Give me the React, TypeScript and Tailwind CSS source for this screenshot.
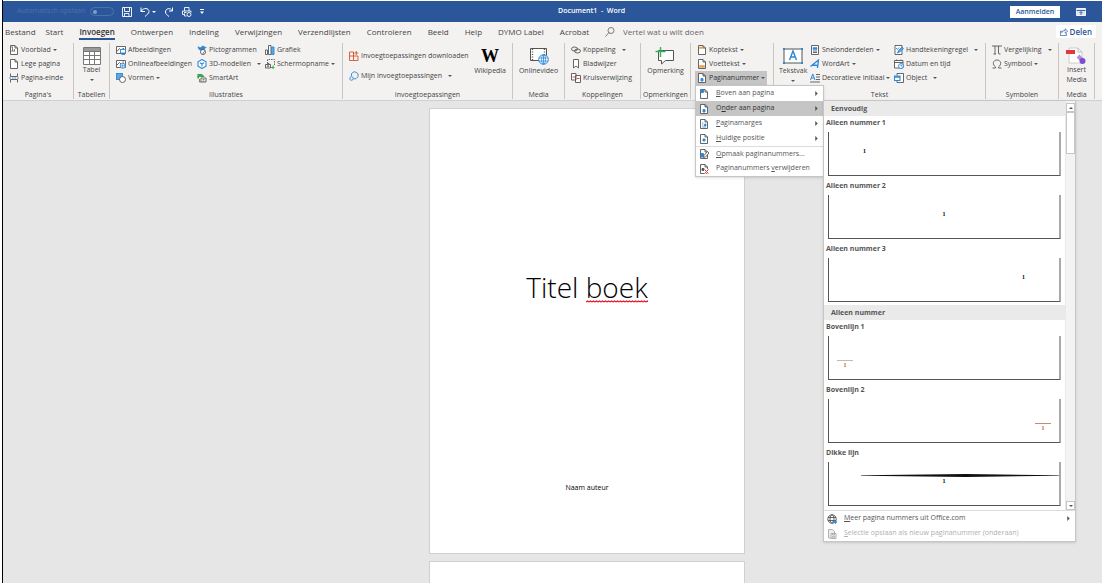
import React from 'react'

type IconProps = { children?: React.ReactNode; className?: string; box?: string }

const Icon = ({ children, className = 'size-[10px]', box = '0 0 20 20' }: IconProps) => (
  <svg viewBox={box} className={`shrink-0 ${className}`} fill="none" stroke="#555" strokeWidth="1.8" aria-hidden="true">
    {children}
  </svg>
)

const BLUE = '#2b88d8'

const PageOutline = () => <path d="M3 1h9l5 5v13H3zM12 1v5h5" fill="#fff" />

const CoverIcon = () => (
  <Icon>
    <PageOutline />
    <path d="M3 4h4M7 3v9M11 8v5M3 12h9" stroke="#777" />
  </Icon>
)

const BlankPageIcon = () => (
  <Icon>
    <PageOutline />
  </Icon>
)

const PageBreakIcon = () => (
  <Icon>
    <path d="M3 1v6h14V1M3 19v-6h14v6" />
    <path d="M0 10h4M6 10h3M11 10h3M16 10h4" stroke={BLUE} />
  </Icon>
)

const TableIcon = () => (
  <Icon className="size-[18px]" box="0 0 18 18">
    <path d="M.5.500h17v17H.5z" fill="#fff" strokeWidth="1" stroke="#777" />
    <path d="M1 2.500h16" strokeWidth="3" stroke="#999" />
    <path d="M1 4.500h16M1 8.500h16M1 12.500h16M6.500 4v13M11.500 4v13" strokeWidth="1" stroke="#777" />
  </Icon>
)

const PicturesIcon = () => (
  <Icon>
    <path d="M1 3h18v14H1zM2 13l5-6 5 5M13 7h3" fill="#fff" />
    <rect x="9" y="9" width="10" height="7" fill="#fff" stroke={BLUE} />
    <path d="M11 19h7" stroke={BLUE} />
  </Icon>
)

const OnlinePicturesIcon = () => (
  <Icon>
    <path d="M1 3h18v14H1zM2 12l5-5 4 4M13 6h3" fill="#fff" />
    <circle cx="13.5" cy="13.5" r="5" fill="#fff" stroke={BLUE} />
    <path d="M9 13.5h9M13.5 9v9" stroke={BLUE} strokeWidth="1.4" />
  </Icon>
)

const ShapesIcon = () => (
  <Icon>
    <rect x="1" y="1" width="12" height="12" fill="#5ba7e4" stroke={BLUE} />
    <circle cx="13" cy="13" r="6" fill="#fff" />
  </Icon>
)

const PictogramIcon = () => (
  <Icon>
    <path d="M2 3c2 2 5 3 7 1 1-3 5-3 6 0l4 1-3 1c0 5-6 6-10 4-3-1-4-4-4-7z" fill={BLUE} stroke={BLUE} strokeWidth="1" />
    <circle cx="12" cy="14" r="5" fill="#fff" />
    <path d="M12 19c0-4 2-6 4-7" strokeWidth="1.4" />
  </Icon>
)

const CubeIcon = () => (
  <Icon>
    <path d="M10 1l8 4.500v9L10 19l-8-4.500v-9z" fill="#fff" stroke={BLUE} strokeWidth="2.200" />
    <path d="M6 7.500l4 2.500 4-2.500M10 10v5" stroke={BLUE} strokeWidth="2.200" />
  </Icon>
)

const SmartArtIcon = () => (
  <Icon>
    <path d="M1 3h9l4 4H1l3 3H1" fill="#3fae49" stroke="#2d9c46" />
    <path d="M8 10h10v8H8z" fill="#fff" />
    <path d="M5 12v6h3M11 13h4M11 16h4" strokeWidth="1.400" />
  </Icon>
)

const ChartIcon = () => (
  <Icon>
    <path d="M1 10h4v9H1zM7 1h5v18H7z" fill="#fff" />
    <path d="M13 4h5v15h-5z" fill="#5ba7e4" stroke={BLUE} />
  </Icon>
)

const ScreenshotIcon = () => (
  <Icon>
    <path d="M5 9V1h14v11" strokeDasharray="3 2" />
    <path d="M1 11h10v7H1z" fill="#fff" />
    <path d="M4 11l1-2h3l1 2" />
    <circle cx="6" cy="14.500" r="1.500" />
    <path d="M12 17h7M16 13v7" stroke="#2fb457" strokeWidth="2.200" />
  </Icon>
)

const StoreIcon = () => (
  <Icon>
    <path d="M1 2h8v17H1zM1 10h17v9H9M9 10V2" stroke="#d8512d" />
    <path d="M14.500 0v8M10.500 4h8" stroke="#d8512d" />
  </Icon>
)

const AddInsIcon = () => (
  <Icon>
    <path d="M5 10V5l5-3.500 4 1 4 3v6l-4 4H9" stroke={BLUE} />
    <circle cx="5" cy="15" r="3.500" stroke={BLUE} />
  </Icon>
)

const VideoIcon = () => (
  <Icon className="h-[18px] w-5" box="0 0 20 18">
    <path d="M1.500 1.500h16v12h-16z" fill="#fff" strokeWidth="1" />
    <path d="M3.500 2v12M15.500 2v6" strokeWidth="1.400" strokeDasharray="1 1.500" />
    <circle cx="14.500" cy="12.500" r="4.800" fill="#fff" stroke={BLUE} strokeWidth="1" />
    <ellipse cx="14.500" cy="12.500" rx="2" ry="4.800" stroke={BLUE} strokeWidth=".8" />
    <path d="M10 11h9M10 14h9M14.500 8v9" stroke={BLUE} strokeWidth=".8" />
  </Icon>
)

const LinkIcon = () => (
  <Icon>
    <ellipse cx="7" cy="8" rx="6" ry="4" />
    <ellipse cx="13" cy="12" rx="6" ry="4" />
  </Icon>
)

const BookmarkIcon = () => (
  <Icon>
    <path d="M5 1h10v17l-5-4-5 4z" fill="#fff" />
  </Icon>
)

const CrossRefIcon = () => (
  <Icon>
    <path d="M1 1h9v13H1zM9 5h10v14H9z" fill="#fff" />
    <path d="M3 8h5M12 11h5" stroke="#e0533a" strokeWidth="2" />
  </Icon>
)

const CommentIcon = () => (
  <Icon className="h-[18px] w-5" box="0 0 20 18">
    <path d="M3.500 3.500h15v10h-8l-4 3.500v-3.500h-3z" fill="#fff" strokeWidth="1" />
    <path d="M5.500 0v10M.500 4.500h10" stroke="#2fb457" strokeWidth="1.400" />
  </Icon>
)

const HeaderIcon = () => (
  <Icon>
    <PageOutline />
    <path d="M5 4h6v3H5z" fill="#ed9b45" stroke="#ed9b45" strokeWidth="1" />
  </Icon>
)

const FooterIcon = () => (
  <Icon>
    <PageOutline />
    <path d="M5 13h10v4H5z" fill="#ed9b45" stroke="#ed9b45" strokeWidth="1" />
  </Icon>
)

type NumberIconProps = { mark: 'top' | 'bottom' | 'side' | 'center' | 'edit' | 'delete' }

const PageNumberIcon = ({ mark }: NumberIconProps) => (
  <Icon>
    <PageOutline />
    {mark === 'top' && <path d="M4 2h5v5H4z" fill={BLUE} stroke={BLUE} />}
    {mark === 'bottom' && <path d="M8 11h4v5H8z" fill={BLUE} stroke={BLUE} />}
    {mark === 'side' && <path d="M11 10h3v4h-3zM6 8h3M6 12h3M6 16h8" fill={BLUE} stroke={BLUE} strokeWidth="1.400" />}
    {mark === 'center' && <path d="M8 10h4v4H8z" fill={BLUE} stroke={BLUE} />}
    {mark === 'edit' && (
      <>
        <path d="M4 9h5v7H4z" fill={BLUE} stroke={BLUE} />
        <path d="M9 17l1-4 7-8 3 3-7 8z" fill="#fff" />
      </>
    )}
    {mark === 'delete' && (
      <>
        <path d="M6 9h4v4H6z" fill="#555" />
        <path d="M11 11l8 8M19 11l-8 8" stroke="#fff" strokeWidth="4" />
        <path d="M11 11l8 8M19 11l-8 8" stroke="#e03a3a" strokeWidth="2" />
      </>
    )}
  </Icon>
)

const TextBoxIcon = () => (
  <Icon className="h-[18px] w-5" box="0 0 20 18">
    <path d="M1 2h18v14H1z" fill="#fff" strokeWidth="1" />
    <path d="M6.500 13l3.500-9 3.500 9M7.700 10h4.600" stroke={BLUE} strokeWidth="1.400" />
    <path d="M0 1h2v2H0zM18 1h2v2h-2zM0 15h2v2H0zM18 15h2v2h-2z" fill={BLUE} stroke="none" />
  </Icon>
)

const QuickPartsIcon = () => (
  <Icon>
    <path d="M3 1h14v18H3z" fill="#fff" />
    <path d="M6 5h8v4H6z" fill={BLUE} stroke={BLUE} strokeWidth="1" />
    <path d="M6 12h8M6 15h8" />
  </Icon>
)

const WordArtIcon = () => (
  <Icon>
    <path d="M1 15L17 2l-2 16M5 12l11 1" stroke={BLUE} strokeWidth="2.600" />
  </Icon>
)

const DropCapIcon = () => (
  <Icon>
    <path d="M1 14L5.500 2 10 14M3 10h5" stroke={BLUE} strokeWidth="2" />
    <path d="M12 3h8M12 8h8M12 13h8M0 18h20" />
  </Icon>
)

const SignatureIcon = () => (
  <Icon>
    <path d="M2 1h14v18H2z" fill="#fff" />
    <path d="M4 6l3 3 3-4" stroke={BLUE} />
    <path d="M7 16l2-5 7-7 3 3-8 7z" fill="#5ba7e4" stroke={BLUE} />
  </Icon>
)

const DateIcon = () => (
  <Icon>
    <path d="M1 3h17v15H1zM1 7h17M5 1v3M14 1v3" fill="#fff" />
    <circle cx="14" cy="14" r="5" fill="#fff" stroke={BLUE} />
    <path d="M14 11v3h3" stroke={BLUE} />
  </Icon>
)

const ObjectIcon = () => (
  <Icon>
    <path d="M6 5V1h13v18H6v-4" fill="#fff" />
    <path d="M1 6h11v9H1z" fill="#fff" stroke={BLUE} strokeWidth="2.200" />
    <path d="M1 8h11" stroke={BLUE} strokeWidth="3" />
  </Icon>
)

const EquationIcon = () => (
  <Icon>
    <path d="M0 2h20M6 2v16M13 2v14q0 3 4 2M3 18h5" />
  </Icon>
)

const OmegaIcon = () => (
  <Icon>
    <path d="M1 18h6v-2C0 11 2 2 10 2s10 9 3 14v2h6" />
  </Icon>
)

const InsertMediaIcon = () => (
  <Icon className="h-[18px] w-5" box="0 0 20 18">
    <path d="M3 1h9l4 4v11H3z" fill="#fff" stroke="#ccc" strokeWidth="1" />
    <path d="M12 1v4h4" stroke="#bbb" strokeWidth="1" />
    <path d="M0 3h9v4H0z" fill="#e0393e" stroke="none" />
    <path d="M12 9l5 5" stroke="#b58be8" strokeWidth="4" />
    <circle cx="16.500" cy="14" r="3" fill="#7b4fd0" stroke="none" />
  </Icon>
)

const GlobeIcon = () => (
  <Icon>
    <circle cx="10" cy="10" r="8.500" />
    <ellipse cx="10" cy="10" rx="4" ry="8.500" />
    <path d="M2 7h16M2 13h16" />
    <path d="M10 16h9M16 13l3 3-3 3" stroke={BLUE} strokeWidth="2.200" />
  </Icon>
)

const SaveSelectionIcon = () => (
  <Icon>
    <path d="M3 1h8l4 4v13H3z" stroke="#aaa" fill="#eee" />
    <path d="M8 9h10v10H8zM11 9v3h4V9M11 19v-4h4v4" stroke="#aaa" fill="#f5f5f5" />
  </Icon>
)

const Caret = () => (
  <svg viewBox="0 0 4 2" className="h-[2px] w-1 shrink-0" fill="#555" aria-hidden="true">
    <path d="M0 0h4L2 2z" />
  </svg>
)

const Arrow = () => (
  <svg viewBox="0 0 3 6" className="h-[5px] w-[3px] shrink-0" fill="#555" aria-hidden="true">
    <path d="M0 0l3 3-3 3z" />
  </svg>
)

type CommandProps = { icon: React.ReactNode; label: string; caret?: 'near' | 'far' }

const Command = ({ icon, label, caret }: CommandProps) => (
  <button type="button" className="flex h-[14px] items-center gap-[2px] whitespace-nowrap">
    {icon}
    <span>{label}</span>
    {caret === 'near' && <Caret />}
    {caret === 'far' && (
      <span className="pl-1">
        <Caret />
      </span>
    )}
  </button>
)

type BigCommandProps = { icon: React.ReactNode; label: string; second?: string; caret?: boolean }

const BigCommand = ({ icon, label, second, caret }: BigCommandProps) => (
  <button type="button" className="flex flex-col items-center pt-[3px] leading-[10px] whitespace-nowrap">
    <span className="flex h-5 items-center">{icon}</span>
    <span>{label}</span>
    {second && <span>{second}</span>}
    {caret && (
      <span className="flex h-[10px] items-center">
        <Caret />
      </span>
    )}
  </button>
)

type GroupProps = { label: string; className: string; body?: string; children: React.ReactNode }

const Group = ({ label, className, body = '', children }: GroupProps) => (
  <section className={`flex shrink-0 flex-col border-r border-[#c8c6c4] ${className}`}>
    <div className={`flex h-[42px] shrink-0 ${body}`}>{children}</div>
    <h2 className="mt-1 text-center leading-3 whitespace-nowrap">{label}</h2>
  </section>
)

const tabs = [
  'Start',
  'Invoegen',
  'Ontwerpen',
  'Indeling',
  'Verwijzingen',
  'Verzendlijsten',
  'Controleren',
  'Beeld',
  'Help',
  'DYMO Label',
  'Acrobat'
]

const TitleBar = () => (
  <header className="grid h-[22px] shrink-0 grid-cols-[555px_1fr_auto] items-center border-t border-white bg-[#2b579a] text-white">
    <div className="flex items-center pl-[14px]">
      <button type="button" role="switch" aria-checked="false" className="flex items-center gap-1 text-[#4a72ae]">
        Automatisch opslaan
        <span className="flex h-[9px] w-6 items-center rounded-full border border-[#4a72ae] pl-[2px]">
          <span className="size-1 rounded-full bg-[#7f9dca]" />
        </span>
      </button>
      <div className="flex items-center gap-2 pl-2">
        <button type="button" aria-label="Opslaan">
          <Icon>
            <path d="M1 1h18v18H1zM5 1v8h10V1M5 19v-6h9v6" stroke="#fff" />
          </Icon>
        </button>
        <button type="button" aria-label="Ongedaan maken" className="flex items-center gap-[2px]">
          <Icon>
            <path d="M2 1v8h8M2 9C7 0 18 2 18 9c0 4-4 6-8 10" stroke="#fff" strokeWidth="2" />
          </Icon>
          <svg viewBox="0 0 4 2" className="h-[2px] w-1" fill="#fff" aria-hidden="true">
            <path d="M0 0h4L2 2z" />
          </svg>
        </button>
        <button type="button" aria-label="Opnieuw">
          <Icon>
            <path d="M17 1v7h-7M17 8C12 0 3 3 3 10c0 4 3 6 7 9" stroke="#fff" strokeWidth="2" />
          </Icon>
        </button>
        <button type="button" aria-label="Afdrukken">
          <Icon>
            <path d="M5 8V1h9v7M4 15H1V8h17v3M5 13v5h4M4 11h5" stroke="#fff" />
            <circle cx="14" cy="15" r="4" stroke="#fff" />
          </Icon>
        </button>
        <button type="button" aria-label="Werkbalk aanpassen">
          <svg viewBox="0 0 4 5" className="h-[5px] w-1" fill="#fff" aria-hidden="true">
            <path d="M0 0h4v1H0zM0 2.500h4L2 5z" />
          </svg>
        </button>
      </div>
    </div>
    <h1 className="font-semibold whitespace-pre">Document1  -  Word</h1>
    <div className="flex items-center gap-4 pr-4">
      <button type="button" className="h-3 w-[50px] bg-white leading-3 font-semibold text-[#2b579a]">
        Aanmelden
      </button>
      <Icon className="h-2 w-[10px]" box="0 0 20 16">
        <path d="M1 1h18v14H1z" fill="#dbe5f3" stroke="#fff" />
        <path d="M1 5h18M10 14V8M7 10l3-3 3 3" stroke="#2b579a" />
      </Icon>
    </div>
  </header>
)

const TabBar = () => (
  <nav className="flex h-[21px] shrink-0 items-center bg-[#f3f2f1] pb-[2px] text-[8px] whitespace-nowrap">
    <button type="button" className="mr-[10px] pl-[2px]">
      Bestand
    </button>
    <div className="flex gap-4">
      {tabs.map((tab) => (
        <button
          key={tab}
          type="button"
          className={
            tab === 'Invoegen'
              ? 'border-y-2 border-t-transparent border-b-[#2b579a] font-semibold text-[#333]'
              : 'border-y-2 border-transparent'
          }
        >
          {tab}
        </button>
      ))}
    </div>
    <label className="flex items-center gap-2 pl-4">
      <Icon>
        <circle cx="12" cy="7" r="6" strokeWidth="1.500" />
        <path d="M8 11l-7 8" strokeWidth="1.500" />
      </Icon>
      <input
        type="text"
        aria-label="Vertel wat u wilt doen"
        placeholder="Vertel wat u wilt doen"
        className="w-24 bg-transparent outline-none placeholder:text-[#666]"
      />
    </label>
    <button
      type="button"
      className="mr-[6px] ml-auto flex h-[13px] items-center gap-[2px] bg-white px-1 font-semibold text-[#2b579a]"
    >
      <Icon className="size-2">
        <path d="M6 8H1v11h15v-6M4 13c1-5 5-7 9-7V2l6 6-6 5v-4" stroke="#2b579a" />
      </Icon>
      Delen
    </button>
  </nav>
)

type MenuItemProps = {
  icon: React.ReactNode
  children: React.ReactNode
  arrow?: boolean
  className?: string
  disabled?: boolean
}

const MenuItem = ({ icon, children, arrow, className = '', disabled }: MenuItemProps) => (
  <button
    type="button"
    role="menuitem"
    disabled={disabled}
    className={`flex h-[15px] w-full items-center gap-[7px] pr-[5px] pl-[3px] whitespace-nowrap ${className}`}
  >
    {icon}
    <span>{children}</span>
    {arrow && (
      <span className="ml-auto">
        <Arrow />
      </span>
    )}
  </button>
)

type PreviewProps = { title: string; children: React.ReactNode }

const Preview = ({ title, children }: PreviewProps) => (
  <button type="button" className="block w-full pr-1 pb-[3px] pl-[2px] text-left">
    <span className="block h-[14px] pr-1 leading-[14px] font-bold">{title}</span>
    <span className="mt-[2px] ml-[2px] block h-11 border-r-2 border-b border-l border-r-[#aaa] border-b-[#555] border-l-[#555] bg-white font-['Liberation_Serif',serif] text-[6px] leading-[6px] font-bold text-black">
      {children}
    </span>
  </button>
)

const GalleryHeading = ({ children }: { children: React.ReactNode }) => (
  <h3 className="h-[15px] bg-[#eaeaea] pl-[7px] leading-[15px] font-bold">{children}</h3>
)

const Gallery = () => (
  <div className="absolute top-[14px] left-full w-[253px] border border-[#c6c6c6] bg-white text-[#555] shadow-sm">
    <div className="flex">
      <div className="flex-1 pb-px">
        <GalleryHeading>Eenvoudig</GalleryHeading>
        <Preview title="Alleen nummer 1">
          <span className="flex px-[34px] pt-4">1</span>
        </Preview>
        <Preview title="Alleen nummer 2">
          <span className="flex justify-center px-[34px] pt-4">1</span>
        </Preview>
        <Preview title="Alleen nummer 3">
          <span className="flex justify-end px-[34px] pt-4">1</span>
        </Preview>
        <GalleryHeading>Alleen nummer</GalleryHeading>
        <Preview title="Bovenlijn 1">
          <span className="flex px-2 pt-6">
            <span className="w-4 border-t border-[#bbb] pt-px text-center text-[#c0603a]">1</span>
          </span>
        </Preview>
        <Preview title="Bovenlijn 2">
          <span className="flex justify-end px-2 pt-6">
            <span className="w-4 border-t border-[#c88a72] pt-px text-center text-[#c0603a]">1</span>
          </span>
        </Preview>
        <Preview title="Dikke lijn">
          <span className="block pt-3 pl-8">
            <svg viewBox="0 0 198 3" preserveAspectRatio="none" className="block h-[3px] w-full" aria-hidden="true">
              <path d="M0 1.300L105 0l93 1.300v.4L105 3 0 1.700z" fill="#111" />
            </svg>
          </span>
          <span className="block pt-px text-center">1</span>
        </Preview>
      </div>
      <div className="flex w-[10px] flex-col items-center border-l border-[#e8e8e8] bg-[#f3f3f3] pt-[2px]">
        <span className="flex size-[9px] items-center justify-center border border-[#c6c6c6] bg-white">
          <svg viewBox="0 0 4 2" className="h-[2px] w-1" fill="#555" aria-hidden="true">
            <path d="M0 2h4L2 0z" />
          </svg>
        </span>
        <span className="h-[42px] w-[9px] border border-[#c6c6c6] bg-white" />
        <span className="mt-auto flex size-[9px] items-center justify-center border border-[#c6c6c6] bg-white">
          <Caret />
        </span>
      </div>
    </div>
    <div className="border-t border-[#dcdcdc]">
      <MenuItem icon={<GlobeIcon />} arrow>
        <u>M</u>eer pagina nummers uit Office.com
      </MenuItem>
      <MenuItem icon={<SaveSelectionIcon />} disabled className="text-[#b0b0b0]">
        <u>S</u>electie opslaan als nieuw paginanummer (onderaan)
      </MenuItem>
    </div>
  </div>
)

const PageNumberMenu = () => (
  <div
    role="menu"
    className="absolute top-full left-0 z-10 w-[129px] border border-[#c6c6c6] bg-white text-[#555] shadow-sm"
  >
    <MenuItem icon={<PageNumberIcon mark="top" />} arrow>
      <u>B</u>oven aan pagina
    </MenuItem>
    <MenuItem icon={<PageNumberIcon mark="bottom" />} arrow className="bg-[#c5c5c5] text-[#333]">
      O<u>n</u>der aan pagina
    </MenuItem>
    <MenuItem icon={<PageNumberIcon mark="side" />} arrow>
      <u>P</u>aginamarges
    </MenuItem>
    <MenuItem icon={<PageNumberIcon mark="center" />} arrow>
      <u>H</u>uidige positie
    </MenuItem>
    <MenuItem icon={<PageNumberIcon mark="edit" />} className="border-t border-[#dcdcdc]">
      <u>O</u>pmaak paginanummers...
    </MenuItem>
    <MenuItem icon={<PageNumberIcon mark="delete" />}>
      Paginanummers <u>v</u>erwijderen
    </MenuItem>
    <Gallery />
  </div>
)

const Ribbon = () => (
  <div className="flex h-[58px] shrink-0 border-b border-[#d2d0ce] bg-[#f3f2f1] pb-px">
    <Group label="Pagina's" className="w-[71px]" body="flex-col pl-[6px]">
      <Command icon={<CoverIcon />} label="Voorblad" caret="near" />
      <Command icon={<BlankPageIcon />} label="Lege pagina" />
      <Command icon={<PageBreakIcon />} label="Pagina-einde" />
    </Group>
    <Group label="Tabellen" className="w-9" body="justify-center">
      <BigCommand icon={<TableIcon />} label="Tabel" caret />
    </Group>
    <Group label="Illustraties" className="w-[233px]" body="pl-[6px]">
      <div className="w-[81px]">
        <Command icon={<PicturesIcon />} label="Afbeeldingen" />
        <Command icon={<OnlinePicturesIcon />} label="Onlineafbeeldingen" />
        <Command icon={<ShapesIcon />} label="Vormen" caret="near" />
      </div>
      <div className="w-[68px]">
        <Command icon={<PictogramIcon />} label="Pictogrammen" />
        <Command icon={<CubeIcon />} label="3D-modellen" caret="far" />
        <Command icon={<SmartArtIcon />} label="SmartArt" />
      </div>
      <div>
        <Command icon={<ChartIcon />} label="Grafiek" />
        <Command icon={<ScreenshotIcon />} label="Schermopname" caret="near" />
      </div>
    </Group>
    <Group label="Invoegtoepassingen" className="w-[170px]" body="justify-between pr-[6px] pl-[6px]">
      <div className="flex flex-col gap-[6px] pt-[6px]">
        <Command icon={<StoreIcon />} label="Invoegtoepassingen downloaden" />
        <Command icon={<AddInsIcon />} label="Mijn invoegtoepassingen" caret="far" />
      </div>
      <BigCommand
        icon={<span className="font-['Liberation_Serif',serif] text-[18px] font-bold text-black">W</span>}
        label="Wikipedia"
      />
    </Group>
    <Group label="Media" className="w-[52px]" body="justify-center">
      <BigCommand icon={<VideoIcon />} label="Onlinevideo" />
    </Group>
    <Group label="Koppelingen" className="w-[76px]" body="flex-col pl-[6px]">
      <Command icon={<LinkIcon />} label="Koppeling" caret="far" />
      <Command icon={<BookmarkIcon />} label="Bladwijzer" />
      <Command icon={<CrossRefIcon />} label="Kruisverwijzing" />
    </Group>
    <Group label="Opmerkingen" className="w-[50px]" body="justify-center">
      <BigCommand icon={<CommentIcon />} label="Opmerking" />
    </Group>
    <Group label="" className="w-[83px]" body="flex-col items-start pl-1">
      <div className="flex flex-col pl-[2px]">
        <Command icon={<HeaderIcon />} label="Koptekst" caret="near" />
        <Command icon={<FooterIcon />} label="Voettekst" caret="near" />
      </div>
      <div className="relative">
        <div className="bg-[#c5c5c5] px-[2px] text-[#333]">
          <Command icon={<PageNumberIcon mark="bottom" />} label="Paginanummer" caret="near" />
        </div>
        <PageNumberMenu />
      </div>
    </Group>
    <Group label="Tekst" className="w-[212px]" body="pl-[5px]">
      <div className="w-[31px]">
        <BigCommand icon={<TextBoxIcon />} label="Tekstvak" caret />
      </div>
      <div className="w-[84px]">
        <Command icon={<QuickPartsIcon />} label="Snelonderdelen" caret="near" />
        <Command icon={<WordArtIcon />} label="WordArt" caret="near" />
        <Command icon={<DropCapIcon />} label="Decoratieve initiaal" caret="near" />
      </div>
      <div>
        <Command icon={<SignatureIcon />} label="Handtekeningregel" caret="far" />
        <Command icon={<DateIcon />} label="Datum en tijd" />
        <Command icon={<ObjectIcon />} label="Object" caret="far" />
      </div>
    </Group>
    <Group label="Symbolen" className="w-[73px]" body="flex-col pl-[6px]">
      <Command icon={<EquationIcon />} label="Vergelijking" caret="far" />
      <Command icon={<OmegaIcon />} label="Symbool" caret="near" />
    </Group>
    <Group label="Media" className="w-9" body="justify-center">
      <BigCommand icon={<InsertMediaIcon />} label="Insert" second="Media" />
    </Group>
  </div>
)

const SpellingMark = () => (
  <svg className="absolute bottom-1 left-0 h-[3px] w-full" aria-hidden="true">
    <defs>
      <pattern id="squiggle" width="3" height="3" patternUnits="userSpaceOnUse">
        <path d="M0 2L1.500 1l1.500 1" fill="none" stroke="#e81123" strokeWidth="1.200" />
      </pattern>
    </defs>
    <rect width="100%" height="3" fill="url(#squiggle)" />
  </svg>
)

const App = () => (
  <div className="h-screen overflow-hidden bg-white pl-[2px]">
    <div className="flex h-full flex-col border-l border-black bg-[#e6e6e6] font-['Open_Sans','Noto_Sans',sans-serif] text-[7px] text-[#444]">
      <TitleBar />
      <TabBar />
      <Ribbon />
      <main className="flex min-h-0 flex-col items-center gap-[7px] overflow-hidden pt-[7px] pl-[69px]">
        <article className="flex h-[446px] w-[316px] shrink-0 flex-col items-center border border-[#d0d0d0] bg-white text-black">
          <p className="mt-[158px] text-[28px] leading-10 font-light">
            Titel{' '}
            <span className="relative inline-block">
              boek
              <SpellingMark />
            </span>
          </p>
          <p className="mt-auto mb-[59px] leading-3">Naam auteur</p>
        </article>
        <article className="h-[446px] w-[316px] shrink-0 border border-[#d0d0d0] bg-white" />
      </main>
    </div>
  </div>
)

export default App
